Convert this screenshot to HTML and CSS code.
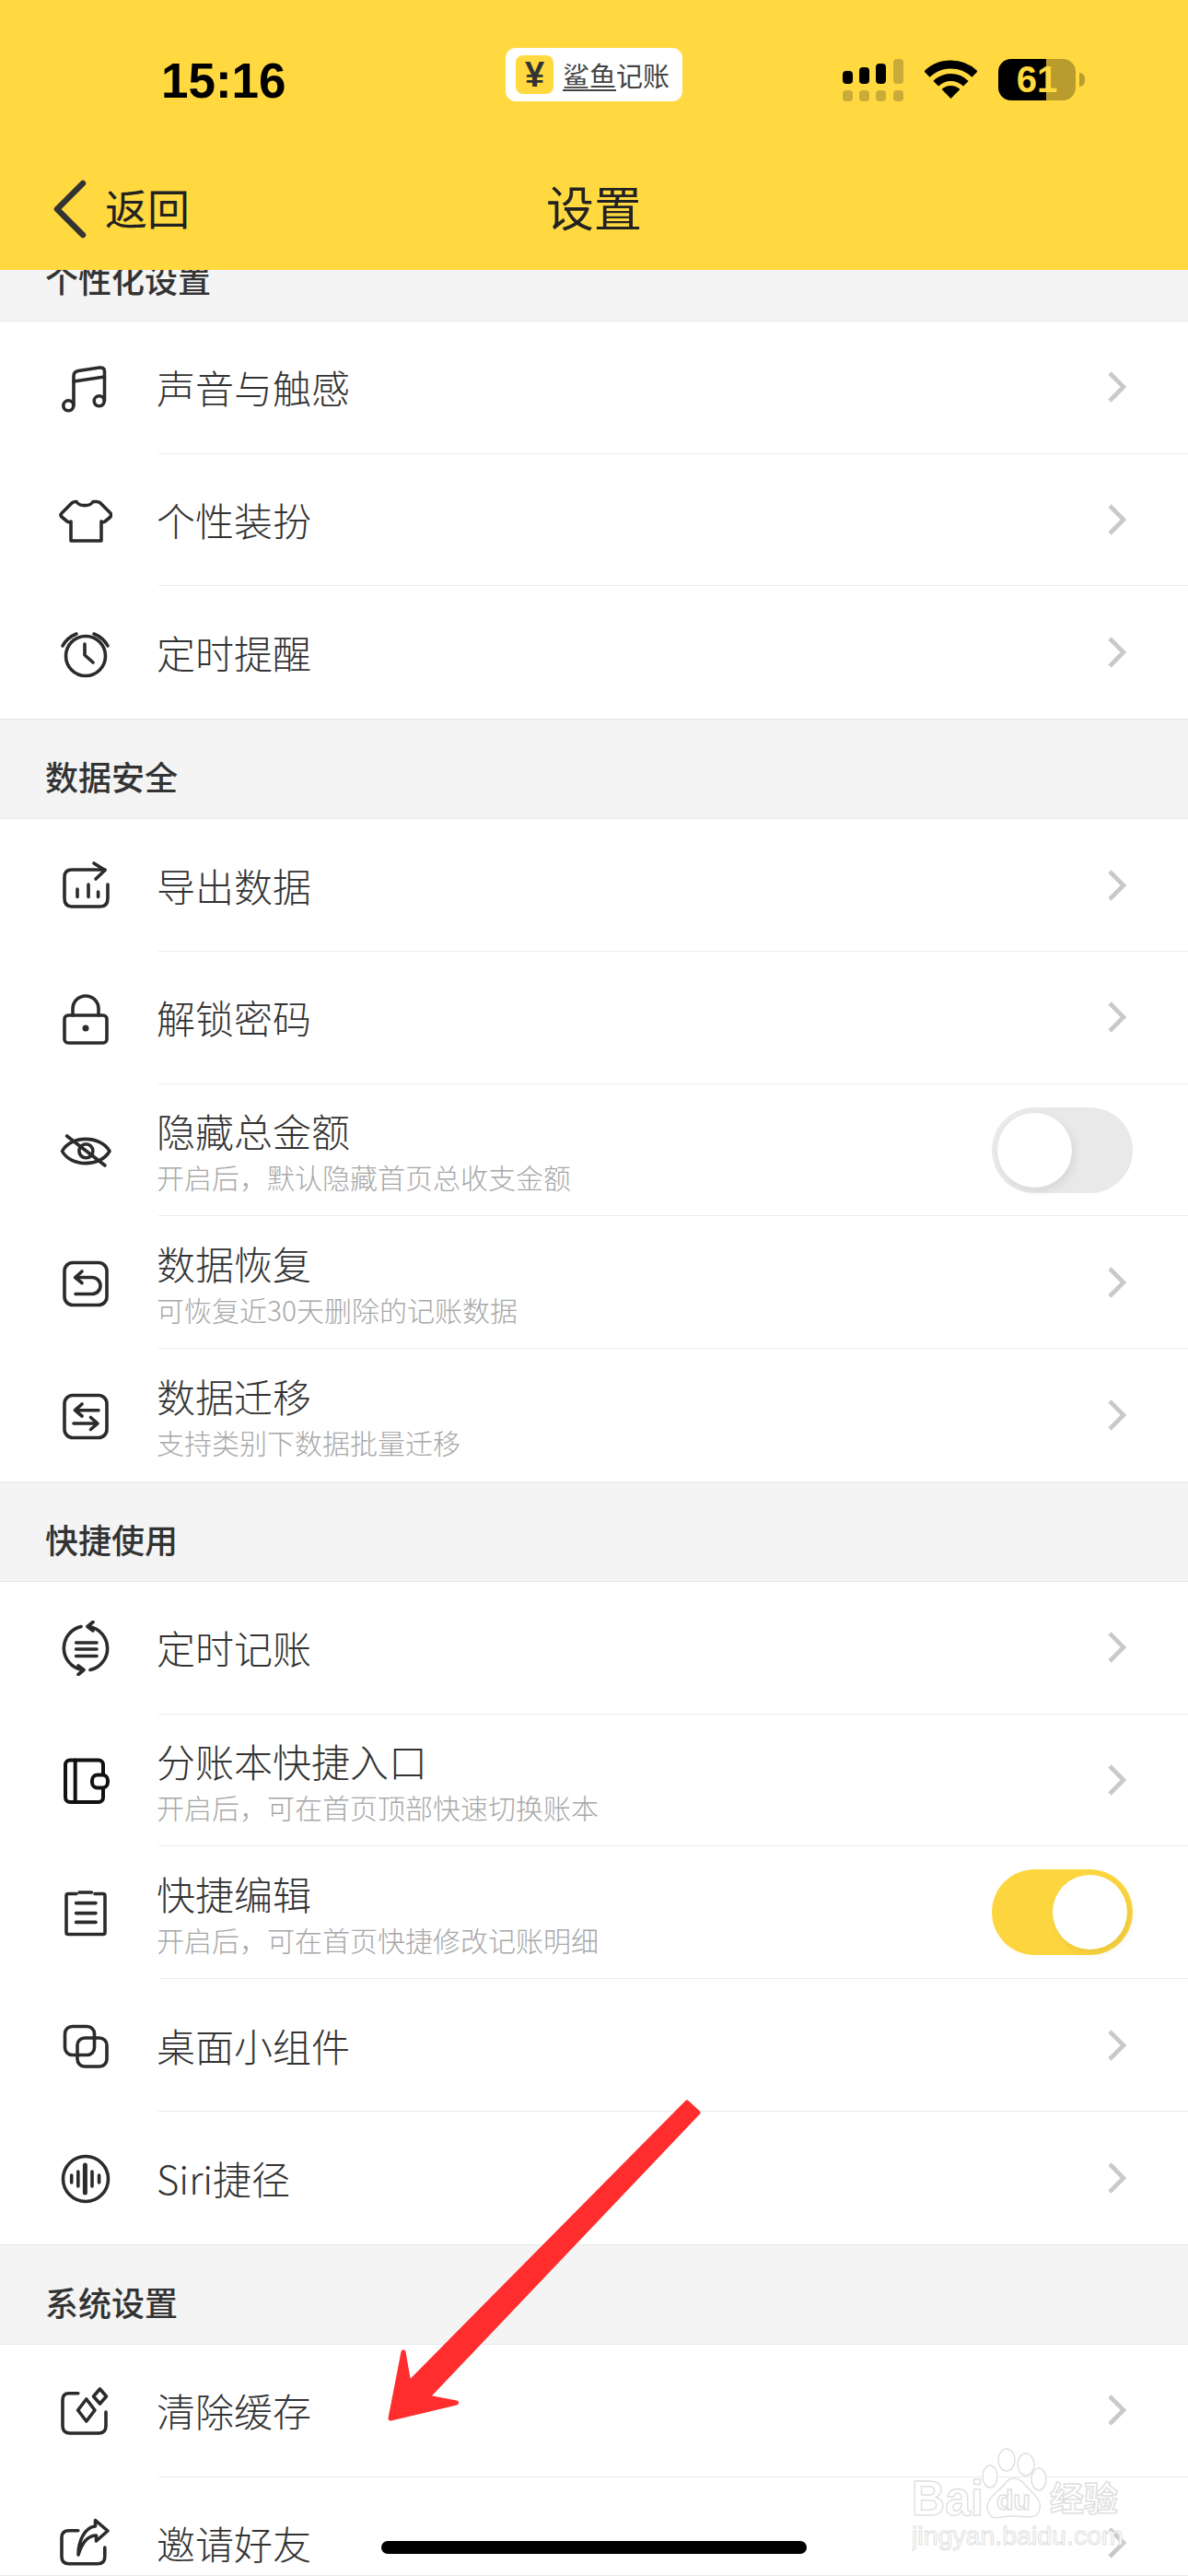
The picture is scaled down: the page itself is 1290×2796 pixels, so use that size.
FILE: index.html
```html
<!DOCTYPE html>
<html lang="zh-CN">
<head>
    <meta charset="UTF-8">
    <meta name="viewport" content="width=device-width, initial-scale=1.0">
    <title>设置</title>
    <link rel="stylesheet" href="styles.css">
</head>
<body>
    <svg class="sprite" width="0" height="0">
        <symbol id="chev" viewBox="0 0 30 36">
            <path d="M5 3 L20 18 L5 33" fill="none" stroke="#c9c9c9" stroke-width="4.6"/>
        </symbol>
    </svg>

    <div class="page">
        <header class="topbar">
            <div class="statusbar">
                <span class="time">15:16</span>
                <div class="app-badge">
                    <span class="app-logo">¥</span>
                    <span class="app-name"><span class="app-name-line">鲨鱼</span>记账</span>
                </div>
                <div class="status-icons">
                    <svg class="signal" width="66" height="46" viewBox="0 0 66 46">
                        <rect x="0" y="13" width="11" height="14" rx="4" fill="#000"/>
                        <rect x="18" y="9" width="11" height="18" rx="4" fill="#000"/>
                        <rect x="36" y="5" width="11" height="22" rx="4" fill="#000"/>
                        <rect x="55" y="0" width="11" height="27" rx="4" fill="#c9ab3a"/>
                        <rect x="0" y="34" width="11" height="12" rx="4" fill="#c9ab3a"/>
                        <rect x="18" y="34" width="11" height="12" rx="4" fill="#c9ab3a"/>
                        <rect x="36" y="34" width="11" height="12" rx="4" fill="#c9ab3a"/>
                        <rect x="55" y="34" width="11" height="12" rx="4" fill="#c9ab3a"/>
                    </svg>
                    <svg class="wifi" width="57" height="42" viewBox="0 0 57 42">
                        <path d="M2.5 15.5 A37.5 37.5 0 0 1 54.5 15.5" fill="none" stroke="#000" stroke-width="9"/>
                        <path d="M12.2 25.7 A23 23 0 0 1 44.8 25.7" fill="none" stroke="#000" stroke-width="8"/>
                        <path d="M28.5 42 L18.6 32 A14 14 0 0 1 38.4 32 Z" fill="#000"/>
                    </svg>
                    <div class="battery"><span class="battery-num">61</span></div>
                    <span class="battery-nub"></span>
                </div>
            </div>
            <div class="navbar">
                <div class="back">
                    <svg width="40" height="64" viewBox="0 0 40 64">
                        <path d="M34 4 L6 32 L34 60" fill="none" stroke="#333" stroke-width="6.5" stroke-linejoin="round" stroke-linecap="round"/>
                    </svg>
                    <span>返回</span>
                </div>
                <h1>设置</h1>
            </div>
        </header>

        <main class="list">
            <div class="section-head">个性化设置</div>
            <div class="row">
                <svg class="icon" viewBox="0 0 60 60">
                    <circle cx="12.3" cy="49.3" r="5.5"/>
                    <circle cx="45.7" cy="44.3" r="5.5"/>
                    <path d="M18 49 V17 Q18 12.5 23 11.5 L46 8 Q51.5 7.5 51.5 12 V44"/>
                    <path d="M18 23 L51.5 18"/>
                </svg>
                <div class="row-main"><div class="row-text"><div class="title">声音与触感</div></div><svg class="chevron"><use href="#chev"/></svg></div>
            </div>
            <div class="row">
                <svg class="icon" viewBox="0 0 60 60">
                    <path d="M21 9.5 C24 15 36 15 39 9.5 L43 9.5 Q45 9.5 47 11 L58 22 Q59 24 58 26 L52 31 Q50 32.5 48 31 V52 H15 V31 Q13 32.5 11 31 L5 26 Q3 24 5 22 L16 11 Q18 9.5 20 9.5 Z"/>
                </svg>
                <div class="row-main"><div class="row-text"><div class="title">个性装扮</div></div><svg class="chevron"><use href="#chev"/></svg></div>
            </div>
            <div class="row">
                <svg class="icon" viewBox="0 0 60 60">
                    <circle cx="31" cy="34" r="21.5"/>
                    <path d="M30 21 V33 L39 41"/>
                    <path d="M6 23 Q11 14 21 10"/>
                    <path d="M55 23 Q50 14 40 10"/>
                </svg>
                <div class="row-main"><div class="row-text"><div class="title">定时提醒</div></div><svg class="chevron"><use href="#chev"/></svg></div>
            </div>

            <div class="section-head">数据安全</div>
            <div class="row">
                <svg class="icon" viewBox="0 0 60 60">
                    <path d="M52 13 H16 Q8 13 8 21 V44 Q8 53 16 53 H47 Q55 53 55 44 V29"/>
                    <path d="M40 6 L52 13.5 L42 23"/>
                    <path d="M22 34 V42.5 M34 29 V42.5 M44.6 37 V42.5"/>
                </svg>
                <div class="row-main"><div class="row-text"><div class="title">导出数据</div></div><svg class="chevron"><use href="#chev"/></svg></div>
            </div>
            <div class="row">
                <svg class="icon" viewBox="0 0 60 60">
                    <rect x="8" y="27" width="46" height="30" rx="4"/>
                    <path d="M17 27 V20 A14 14 0 0 1 45 20 V27"/>
                    <circle class="solid" cx="31" cy="41" r="3.5"/>
                </svg>
                <div class="row-main"><div class="row-text"><div class="title">解锁密码</div></div><svg class="chevron"><use href="#chev"/></svg></div>
            </div>
            <div class="row">
                <svg class="icon" viewBox="0 0 60 60">
                    <path d="M5.5 30.5 C15 13 47 13 57 30.5 C47 48 15 48 5.5 30.5 Z"/>
                    <circle cx="31.4" cy="30.3" r="7.5"/>
                    <path d="M10.6 14 L52 46"/>
                </svg>
                <div class="row-main">
                    <div class="row-text">
                        <div class="title">隐藏总金额</div>
                        <div class="subtitle">开启后，默认隐藏首页总收支金额</div>
                    </div>
                    <div class="toggle"><span class="knob"></span></div>
                </div>
            </div>
            <div class="row">
                <svg class="icon" viewBox="0 0 60 60">
                    <rect x="8" y="8.5" width="46" height="46" rx="9"/>
                    <path d="M27 18 L19.7 24.5 L27 30.5"/>
                    <path d="M19.7 24.5 H38 A9 9 0 0 1 38 42.5 H20"/>
                </svg>
                <div class="row-main">
                    <div class="row-text">
                        <div class="title">数据恢复</div>
                        <div class="subtitle">可恢复近30天删除的记账数据</div>
                    </div>
                    <svg class="chevron"><use href="#chev"/></svg>
                </div>
            </div>
            <div class="row">
                <svg class="icon" viewBox="0 0 60 60">
                    <rect x="8" y="8.5" width="46" height="46" rx="9"/>
                    <path d="M45 24.7 H19.5 M27 18 L19.5 24.7 L27 31"/>
                    <path d="M18 39 H44 M36.5 32.5 L44 39 L36.5 45.5"/>
                </svg>
                <div class="row-main">
                    <div class="row-text">
                        <div class="title">数据迁移</div>
                        <div class="subtitle">支持类别下数据批量迁移</div>
                    </div>
                    <svg class="chevron"><use href="#chev"/></svg>
                </div>
            </div>

            <div class="section-head">快捷使用</div>
            <div class="row">
                <svg class="icon" viewBox="0 0 60 60">
                    <path d="M35 6.5 A24 24 0 0 1 36 53.5"/>
                    <path d="M27 53.5 A24 24 0 0 1 26 6.5"/>
                    <path d="M39 1.5 L33 6.5 L39 11"/>
                    <path d="M23 49 L29 53.5 L23 58.5"/>
                    <path d="M20.6 24 H43 M20.6 31 H43 M20.6 38.5 H43"/>
                </svg>
                <div class="row-main"><div class="row-text"><div class="title">定时记账</div></div><svg class="chevron"><use href="#chev"/></svg></div>
            </div>
            <div class="row">
                <svg class="icon icon-dark" viewBox="0 0 60 60">
                    <rect x="9" y="7.5" width="41" height="45.5" rx="5"/>
                    <path d="M19.7 7.5 V53"/>
                    <rect class="fill-white" x="38" y="23.5" width="17" height="14" rx="6"/>
                </svg>
                <div class="row-main">
                    <div class="row-text">
                        <div class="title">分账本快捷入口</div>
                        <div class="subtitle">开启后，可在首页顶部快速切换账本</div>
                    </div>
                    <svg class="chevron"><use href="#chev"/></svg>
                </div>
            </div>
            <div class="row">
                <svg class="icon" viewBox="0 0 60 60">
                    <path d="M21 9.5 H12 Q10 9.5 10 11.5 V51.5 Q10 53.5 12 53.5 H50 Q52 53.5 52 51.5 V11.5 Q52 9.5 50 9.5 H41"/>
                    <path d="M24 8 H37.5"/>
                    <path d="M20.6 19.6 H42 M20.6 30.6 H42 M20.6 40.4 H42"/>
                </svg>
                <div class="row-main">
                    <div class="row-text">
                        <div class="title">快捷编辑</div>
                        <div class="subtitle">开启后，可在首页快捷修改记账明细</div>
                    </div>
                    <div class="toggle toggle-on"><span class="knob"></span></div>
                </div>
            </div>
            <div class="row">
                <svg class="icon" viewBox="0 0 60 60">
                    <rect x="8.5" y="9.5" width="32" height="31" rx="8"/>
                    <rect x="22" y="22" width="32" height="31" rx="8"/>
                </svg>
                <div class="row-main"><div class="row-text"><div class="title">桌面小组件</div></div><svg class="chevron"><use href="#chev"/></svg></div>
            </div>
            <div class="row">
                <svg class="icon" viewBox="0 0 60 60">
                    <circle cx="31" cy="31" r="24.5"/>
                    <path d="M15.7 27 V35 M22.8 23 V39 M38 23 V39 M45.6 27 V35"/>
                    <path d="M30.4 16 V46" stroke-width="5"/>
                </svg>
                <div class="row-main"><div class="row-text"><div class="title">Siri捷径</div></div><svg class="chevron"><use href="#chev"/></svg></div>
            </div>

            <div class="section-head">系统设置</div>
            <div class="row">
                <svg class="icon" viewBox="0 0 60 60">
                    <path d="M22.8 10.7 H13 Q6 10.7 6 18 V46 Q6 54 14 54 H45 Q53 54 53 46 V31"/>
                    <path d="M31.8 17 L41 29 L31.8 41 L22.6 29 Z"/>
                    <path d="M46.5 6 L53.5 14 L46.5 22 L39.5 14 Z"/>
                </svg>
                <div class="row-main"><div class="row-text"><div class="title">清除缓存</div></div><svg class="chevron"><use href="#chev"/></svg></div>
            </div>
            <div class="row">
                <svg class="icon" viewBox="0 0 60 60">
                    <path d="M22.8 16.7 H13 Q5 16.7 5 24 V45 Q5 52.7 13 52.7 H44 Q51.8 52.7 51.8 45 V35"/>
                    <path d="M41.5 5.5 L55 17 L42.5 28 V22 C33 22 27 30 23 43 C23 28 30 13 41.5 12 Z"/>
                </svg>
                <div class="row-main"><div class="row-text"><div class="title">邀请好友</div></div><svg class="chevron"><use href="#chev"/></svg></div>
            </div>
        </main>

        <!-- annotation drawn over the screenshot -->
        <svg class="red-arrow" width="360" height="365" viewBox="0 0 360 365">
            <path d="M336 7 L348 18 L54 327 L85.5 333 L14 350 L28 278 L34 312 Z" fill="#ff2d2d" stroke="#ff2d2d" stroke-width="5" stroke-linejoin="round"/>
        </svg>

        <svg class="watermark" width="240" height="120" viewBox="0 0 240 120">
            <g fill="#fff" stroke="#e0e0e0" stroke-width="1.5">
                <ellipse cx="103" cy="14" rx="9" ry="12"/>
                <ellipse cx="124" cy="19" rx="9" ry="12"/>
                <ellipse cx="85" cy="32" rx="8" ry="12"/>
                <ellipse cx="138" cy="35" rx="8" ry="12"/>
                <path d="M83 70 C78 56 94 50 101 40 C108 30 118 34 124 42 C130 50 144 58 138 70 C134 80 120 74 110 75 C100 74 87 82 83 70 Z"/>
                <text class="wm-latin" x="0" y="74" font-size="54" textLength="78" lengthAdjust="spacingAndGlyphs">Bai</text>
                <text class="wm-latin" x="92" y="68" font-size="30">du</text>
                <text class="wm-cjk" x="150" y="70" font-size="37">经验</text>
                <text class="wm-thin" x="0" y="106" font-size="28.5">jingyan.baidu.com</text>
            </g>
        </svg>

        <div class="home-indicator"></div>
        <div class="bottom-line"></div>
    </div>
</body>
</html>
```

FILE: styles.css
```css
* {
    box-sizing: border-box;
}
html, body {
    margin: 0;
    padding: 0;
}
body {
    font-family: "Noto Sans CJK SC", "Liberation Sans", sans-serif;
    color: #333;
    background: #f4f4f4;
}
.sprite {
    display: block;
    height: 0;
}
.page {
    position: relative;
    width: 1290px;
    height: 2796px;
    overflow: hidden;
    background: #f4f4f4;
}

/* yellow top area */
.topbar {
    position: relative;
    z-index: 1;
    height: 293px;
    background: #ffd93f;
}
.statusbar {
    height: 147px;
    display: flex;
    align-items: flex-start;
    padding: 52px 0 0 175px;
}
.time {
    width: 374px;
    margin-top: 6px;
    font-family: "Liberation Sans", sans-serif;
    font-size: 53px;
    line-height: 60px;
    font-weight: bold;
    color: #000;
}
.app-badge {
    width: 192px;
    height: 58px;
    display: flex;
    align-items: center;
    padding-left: 11px;
    background: #fff;
    border-radius: 11px;
}
.app-logo {
    width: 41px;
    height: 42px;
    display: flex;
    align-items: center;
    justify-content: center;
    background: #ffd93f;
    border-radius: 8px;
    font-family: "Liberation Sans", sans-serif;
    font-size: 38px;
    font-weight: bold;
    color: #333;
}
.app-name {
    margin-left: 10px;
    font-size: 29px;
    line-height: 36px;
    font-weight: 400;
    color: #444;
    white-space: nowrap;
}
.app-name-line {
    display: inline-block;
    line-height: 32px;
    border-bottom: 2px solid #444;
}
.status-icons {
    display: flex;
    align-items: flex-start;
    margin-left: 174px;
    margin-top: 12px;
}
.wifi {
    margin-left: 23px;
    margin-top: 1px;
}
.battery {
    width: 84px;
    height: 45px;
    margin-left: 23px;
    display: flex;
    align-items: center;
    justify-content: center;
    border-radius: 14px;
    background: linear-gradient(to right, #000 62%, #b89c2e 62%);
}
.battery-num {
    font-family: "Liberation Sans", sans-serif;
    font-size: 40px;
    font-weight: bold;
    color: #ffd93f;
}
.battery-nub {
    width: 6px;
    height: 15px;
    margin: 15px 0 0 4px;
    border-radius: 0 8px 8px 0;
    background: #b89c2e;
}
.navbar {
    position: relative;
    height: 146px;
    display: flex;
    align-items: flex-start;
    justify-content: center;
    padding-top: 43px;
}
.navbar h1 {
    margin: 0;
    font-size: 52px;
    line-height: 68px;
    font-weight: 400;
    color: #222;
}
.back {
    position: absolute;
    left: 56px;
    top: 42px;
    display: flex;
    align-items: center;
    gap: 18px;
    font-size: 46px;
    line-height: 64px;
    font-weight: 400;
    color: #222;
}
.back svg {
    display: block;
    margin-top: 6px;
}

/* settings list, scrolled a little under the top area */
.list {
    margin-top: -53.3px;
}
.section-head {
    height: 109.3px;
    display: flex;
    align-items: center;
    padding: 15px 0 0 49px;
    font-size: 36px;
    font-weight: 500;
    color: #333;
    background: #f4f4f4;
    border-top: 1px solid #e8e8e8;
    border-bottom: 1px solid #e8e8e8;
}
.row {
    height: 143.7px;
    display: flex;
    align-items: center;
    padding-left: 62px;
    background: #fff;
}
.row:has(+ .section-head) .row-main {
    border-bottom: none;
}
.icon {
    width: 60px;
    height: 60px;
    flex: none;
    fill: none;
    stroke: #2b2b2b;
    stroke-width: 3.6;
    stroke-linecap: round;
    stroke-linejoin: round;
}
.icon .solid {
    fill: #2b2b2b;
    stroke: none;
}
.icon-dark {
    stroke: #111;
    stroke-width: 4;
}
.icon .fill-white {
    fill: #fff;
}
.row-main {
    flex: 1;
    height: 100%;
    margin-left: 50px;
    padding-right: 60px;
    display: flex;
    align-items: center;
    justify-content: space-between;
    border-bottom: 1px solid #ebebeb;
}
.row-text {
    margin-left: -2px;
}
.title {
    font-size: 42px;
    line-height: 56px;
    font-weight: 300;
    color: #333;
}
.subtitle {
    margin-top: 2px;
    font-size: 30px;
    line-height: 40px;
    font-weight: 300;
    color: #a8a8a8;
}
.chevron {
    width: 30px;
    height: 36px;
    display: block;
}
.toggle {
    width: 153px;
    height: 93px;
    padding: 6px;
    border-radius: 47px;
    background: #e9e9ea;
}
.knob {
    display: block;
    width: 81px;
    height: 81px;
    border-radius: 50%;
    background: #fff;
    box-shadow: 3px 4px 10px rgba(0,0,0,0.08);
}
.toggle-on {
    background: #fdd63f;
}
.toggle-on .knob {
    margin-left: auto;
}

/* things on top of the screenshot */
.red-arrow {
    position: absolute;
    left: 410px;
    top: 2275px;
}
.watermark {
    position: absolute;
    left: 990px;
    top: 2656px;
}
.wm-latin {
    font-family: "Liberation Sans", sans-serif;
    font-weight: bold;
}
.wm-cjk {
    font-family: "Noto Sans CJK SC", sans-serif;
    font-weight: bold;
}
.wm-thin {
    font-family: "Liberation Sans", sans-serif;
    stroke-width: 1;
}
.home-indicator {
    position: absolute;
    left: 414px;
    top: 2758px;
    width: 462px;
    height: 14px;
    border-radius: 7px;
    background: #000;
}
.bottom-line {
    position: absolute;
    left: 0;
    right: 0;
    bottom: 0;
    height: 1px;
    background: #ebebeb;
}
```
